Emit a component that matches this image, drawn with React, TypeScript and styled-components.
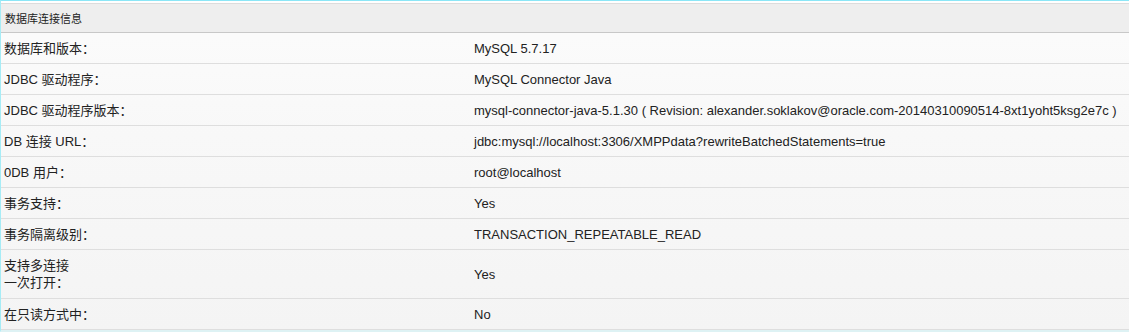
import React from 'react';
import styled, { createGlobalStyle } from 'styled-components';

const GlobalStyle = createGlobalStyle`
  body {
    margin: 0;
    background: #ffffff;
    font-family: 'Liberation Sans', 'Noto Sans CJK SC', sans-serif;
    color: #222;
  }
`;

const Frame = styled.div`
  width: 1128px;
  border-top: 1px solid #8ce6f6;
  border-left: 1px solid #a6ecf6;
  padding-top: 2px;
  border-bottom: 2px solid #def2f4;
`;

const Table = styled.div`
  border-top: 1px solid #dcdcdc;
  background: linear-gradient(to bottom, #fcfcfc 0%, #f8f8f8 40%, #f4f4f4 100%);
`;

const HeaderRow = styled.div`
  height: 28px;
  display: flex;
  align-items: center;
  padding-left: 4px;
  background: #eeeeee;
  border-bottom: 1px solid #c8c8c8;
  font-size: 11px;
  color: #222;
`;

const Row = styled.div<{ $tall?: boolean }>`
  display: grid;
  grid-template-columns: 469px 1fr;
  align-items: center;
  height: ${p => (p.$tall ? 48 : 30)}px;
  border-bottom: 1px solid #dedede;
  font-size: 13px;
  line-height: 17px;
`;

const Label = styled.div`
  padding-left: 3px;
  color: #222;
`;

const Value = styled.div`
  padding-left: 4px;
  color: #222;
`;

const rows: { label: React.ReactNode; value: string; tall?: boolean }[] = [
  { label: '数据库和版本：', value: 'MySQL 5.7.17' },
  { label: 'JDBC 驱动程序：', value: 'MySQL Connector Java' },
  {
    label: 'JDBC 驱动程序版本：',
    value: 'mysql-connector-java-5.1.30 ( Revision: alexander.soklakov@oracle.com-20140310090514-8xt1yoht5ksg2e7c )',
  },
  { label: 'DB 连接 URL：', value: 'jdbc:mysql://localhost:3306/XMPPdata?rewriteBatchedStatements=true' },
  { label: '0DB 用户：', value: 'root@localhost' },
  { label: '事务支持：', value: 'Yes' },
  { label: '事务隔离级别：', value: 'TRANSACTION_REPEATABLE_READ' },
  {
    label: (
      <>
        支持多连接
        <br />
        一次打开：
      </>
    ),
    value: 'Yes',
    tall: true,
  },
  { label: '在只读方式中：', value: 'No' },
];

const App: React.FC = () => (
  <>
    <GlobalStyle />
    <Frame>
      <Table>
        <HeaderRow>数据库连接信息</HeaderRow>
        {rows.map((r, i) => (
          <Row key={i} $tall={r.tall}>
            <Label>{r.label}</Label>
            <Value>{r.value}</Value>
          </Row>
        ))}
      </Table>
    </Frame>
  </>
);

export default App;
